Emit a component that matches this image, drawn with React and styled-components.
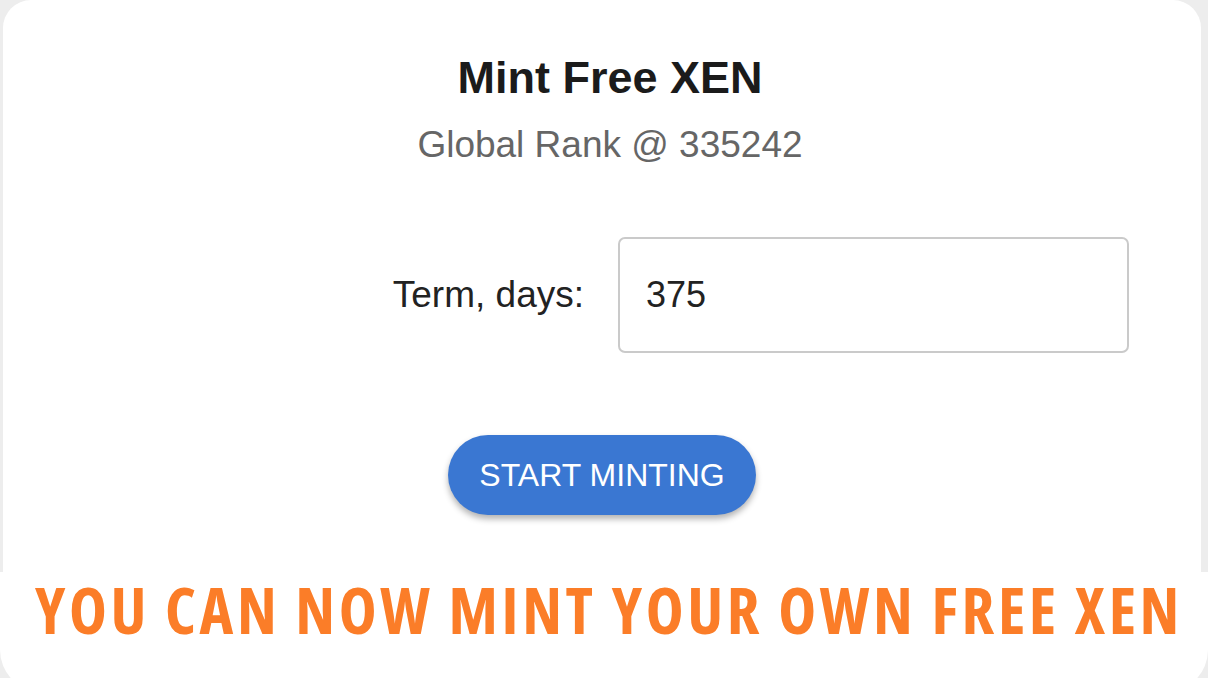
import React from "react";
import styled, { createGlobalStyle } from "styled-components";

const Global = createGlobalStyle`
  html, body { margin: 0; padding: 0; background: #ededed; }
  #root { width: 1208px; height: 678px; }
`;

const Page = styled.div`
  width: 1208px;
  height: 678px;
  overflow: hidden;
  display: flex;
  flex-direction: column;
  background: #ededed;
`;

const Card = styled.div`
  margin: 0 7px 0 3px;
  flex: 0 0 572px;
  background: #fff;
  border-radius: 28px 28px 0 0;
  display: flex;
  flex-direction: column;
  align-items: center;
  padding-top: 52px;
  box-sizing: border-box;
  font-family: "Liberation Sans", Arial, sans-serif;
`;

const Heading = styled.div`
  display: flex;
  flex-direction: column;
  align-items: center;
  padding-left: 16px;
`;

const Title = styled.h1`
  margin: 0;
  font-size: 45px;
  font-weight: 700;
  color: #1b1b1b;
  line-height: 52px;
`;

const Subtitle = styled.div`
  margin-top: 20px;
  font-size: 37px;
  color: #666;
  line-height: 42px;
`;

const FormRow = styled.div`
  align-self: stretch;
  margin-top: 71px;
  display: flex;
  justify-content: flex-end;
  align-items: center;
  gap: 34px;
  padding-right: 72px;
`;

const Label = styled.label`
  font-size: 37px;
  color: #222;
`;

const Input = styled.input`
  box-sizing: border-box;
  width: 511px;
  height: 116px;
  border: 2px solid #cacaca;
  border-radius: 7px;
  padding: 0 0 0 26px;
  font-family: "Liberation Sans", Arial, sans-serif;
  font-size: 36px;
  color: #222;
  outline: none;
  background: #fff;
`;

const Button = styled.button`
  margin-top: 82px;
  width: 308px;
  height: 80px;
  border: none;
  border-radius: 40px;
  background: #3a77d2;
  color: #fff;
  font-family: "Liberation Sans", Arial, sans-serif;
  font-size: 32px;
  padding: 0;
  box-shadow: 0 4px 6px rgba(0, 0, 0, 0.3);
  cursor: pointer;
`;

const Banner = styled.div`
  flex: 0 0 120px;
  background: #fff;
  border-radius: 0 0 42px 42px;
  display: flex;
  justify-content: center;
  padding-top: 0px;
  padding-left: 10px;
  box-sizing: border-box;
`;

const BannerText = styled.div`
  font-family: "Open Sans", Lato, sans-serif;
  font-weight: 700;
  font-stretch: 75%;
  font-size: 64px;
  letter-spacing: 3.6px;
  line-height: 76px;
  color: #fb7d28;
  white-space: nowrap;
`;

export default function App() {
  return (
    <Page>
      <Global />
      <Card>
        <Heading>
          <Title>Mint Free XEN</Title>
          <Subtitle>Global Rank @ 335242</Subtitle>
        </Heading>
        <FormRow>
          <Label>Term, days:</Label>
          <Input defaultValue="375" />
        </FormRow>
        <Button>START MINTING</Button>
      </Card>
      <Banner>
        <BannerText>YOU CAN NOW MINT YOUR OWN FREE XEN</BannerText>
      </Banner>
    </Page>
  );
}
